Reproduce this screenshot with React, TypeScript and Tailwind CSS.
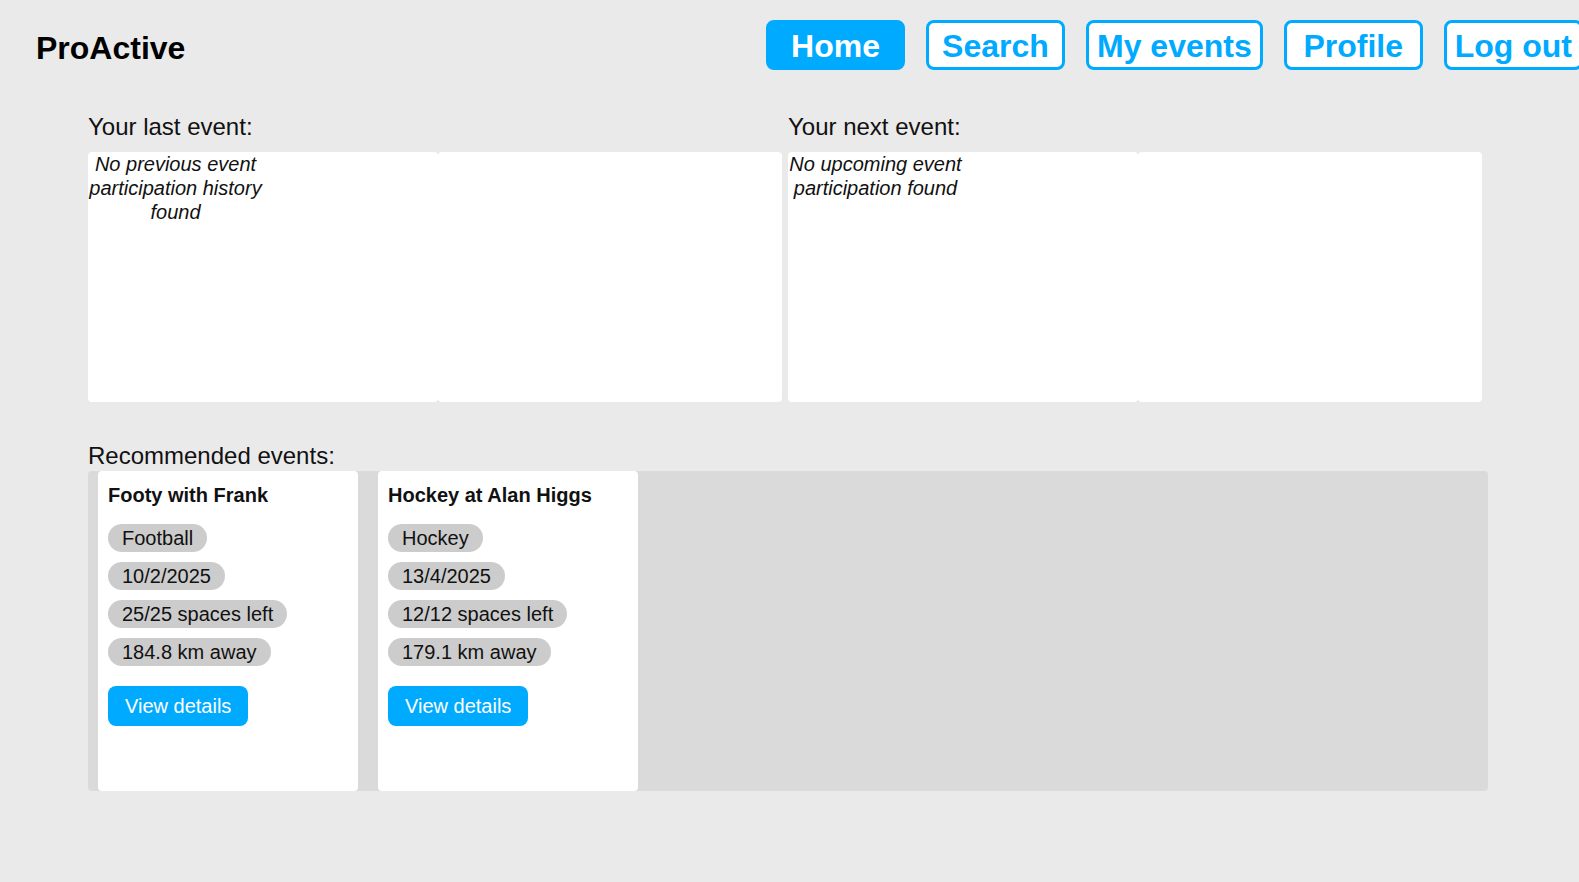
import { useState } from 'react'

type Rec = {
  title: string
  sport: string
  date: string
  spaces: string
  distance: string
}

const recommended: Rec[] = [
  { title: 'Footy with Frank', sport: 'Football', date: '10/2/2025', spaces: '25/25 spaces left', distance: '184.8 km away' },
  { title: 'Hockey at Alan Higgs', sport: 'Hockey', date: '13/4/2025', spaces: '12/12 spaces left', distance: '179.1 km away' },
]

const navItems = ['Home', 'Search', 'My events', 'Profile', 'Log out']

export default function App() {
  const [active, setActive] = useState('Home')

  return (
    <div className="min-h-screen w-full overflow-hidden bg-[#eaeaea] font-['Liberation_Sans',Arial,sans-serif] text-[#111]">
      {/* Header */}
      <header className="flex items-start pl-[36px] pt-[20px]">
        <div className="flex-1 mt-[10px] text-[32px] font-bold leading-[37px] text-black">ProActive</div>
        <nav className="flex shrink-0 gap-[21px] -mr-[4px]">
          {navItems.map((item) => (
            <button
              key={item}
              onClick={() => setActive(item)}
              className={
                active === item
                  ? 'flex h-[50px] min-w-[139px] items-center justify-center rounded-[8px] border-[3px] border-[#00aaff] bg-[#00aaff] px-[8px] pt-[2px] text-[32px] font-bold leading-[37px] text-white'
                  : 'flex h-[50px] min-w-[139px] items-center justify-center rounded-[8px] border-[3px] border-[#00aaff] bg-white px-[8px] pt-[2px] text-[32px] font-bold leading-[37px] text-[#00aaff]'
              }
            >
              {item}
            </button>
          ))}
        </nav>
      </header>

      <main className="pl-[88px]">
        {/* Last / next event */}
        <section className="mt-[43px] flex w-[1394px] gap-[6px]">
          <div className="w-[694px]">
            <h2 className="mb-[11px] text-[24px] leading-[28px]">Your last event:</h2>
            <div className="flex h-[250px]">
              <div className="w-[350px] rounded-[4px] bg-white">
                <p className="w-1/2 text-center text-[20px] italic leading-[24px]">
                  No previous event participation history found
                </p>
              </div>
              <div className="flex-1 rounded-[4px] bg-white"></div>
            </div>
          </div>
          <div className="w-[694px]">
            <h2 className="mb-[11px] text-[24px] leading-[28px]">Your next event:</h2>
            <div className="flex h-[250px]">
              <div className="w-[350px] rounded-[4px] bg-white">
                <p className="w-1/2 text-center text-[20px] italic leading-[24px]">
                  No upcoming event participation found
                </p>
              </div>
              <div className="flex-1 rounded-[4px] bg-white"></div>
            </div>
          </div>
        </section>

        {/* Recommended */}
        <section className="mt-[40px]">
          <h2 className="text-[24px] leading-[28px]">Recommended events:</h2>
          <div className="mt-[1px] flex h-[320px] w-[1400px] gap-[20px] rounded-[4px] bg-[#dadada] pl-[10px]">
            {recommended.map((ev) => (
              <div key={ev.title} className="w-[260px] rounded-[4px] bg-white px-[10px] pt-[13px]">
                <h3 className="text-[20px] font-bold leading-[23px]">{ev.title}</h3>
                <div className="mt-[17px] flex flex-col items-start gap-[10px]">
                  {[ev.sport, ev.date, ev.spaces, ev.distance].map((t) => (
                    <span key={t} className="h-[28px] rounded-full bg-[#cccccc] px-[14px] text-[20px] leading-[28px]">
                      {t}
                    </span>
                  ))}
                </div>
                <button className="mt-[20px] h-[40px] rounded-[8px] bg-[#00aaff] px-[17px] text-[20px] leading-[23px] text-white">
                  View details
                </button>
              </div>
            ))}
          </div>
        </section>
      </main>
    </div>
  )
}
